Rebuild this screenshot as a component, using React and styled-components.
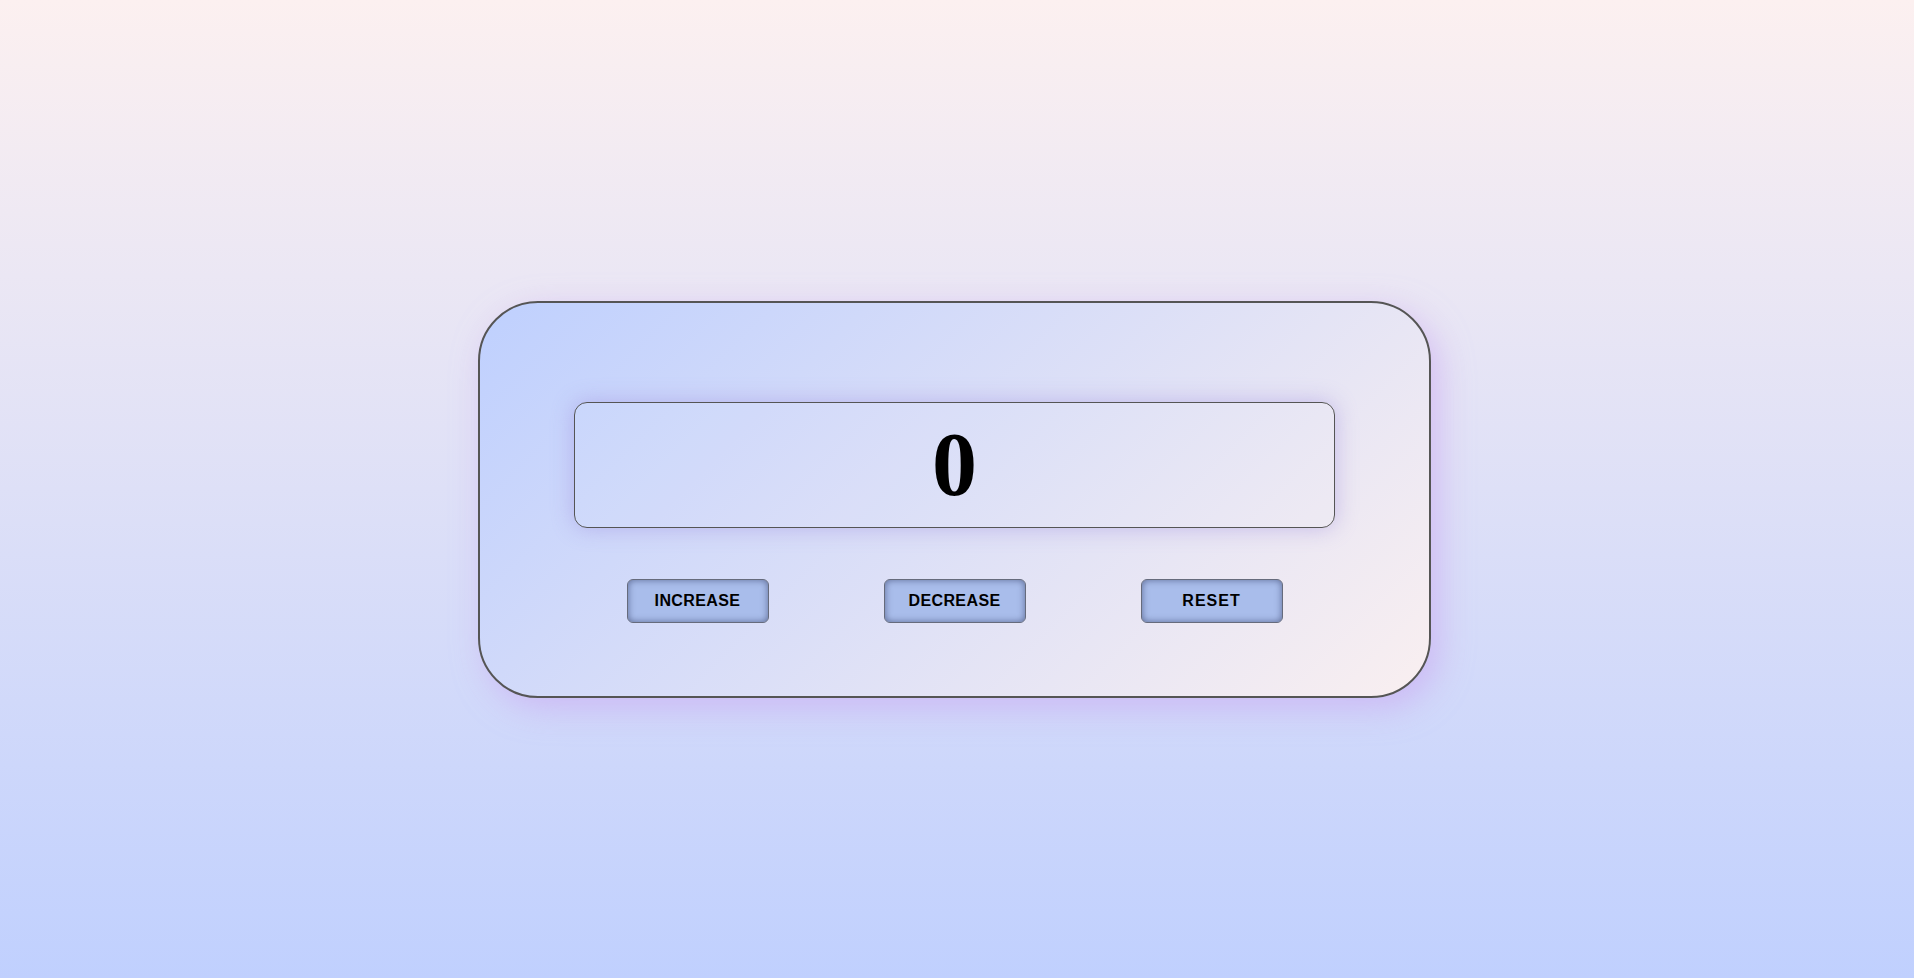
import React, { useState } from 'react';
import styled, { createGlobalStyle } from 'styled-components';

const GlobalStyle = createGlobalStyle`
  html, body {
    margin: 0;
    padding: 0;
  }
  body {
    font-family: "Liberation Sans", Arial, sans-serif;
  }
`;

const Page = styled.div`
  box-sizing: border-box;
  height: 100vh;
  overflow: hidden;
  padding: 20px 5px 0 0;
  display: flex;
  align-items: center;
  justify-content: center;
  background: linear-gradient(to bottom, #fcf0f0 0%, #c0d0fe 100%);
`;

const Card = styled.div`
  box-sizing: border-box;
  width: 953px;
  height: 397px;
  padding-top: 99px;
  border: 2px solid #555;
  border-radius: 60px;
  display: flex;
  flex-direction: column;
  align-items: center;
  background: linear-gradient(135deg, #bfd0fe 0%, #f9eff0 100%);
  box-shadow: 8px 10px 32px rgba(200, 160, 240, 0.55);
`;

const Display = styled.div`
  box-sizing: border-box;
  width: 761px;
  height: 126px;
  border: 1px solid #555;
  border-radius: 13px;
  display: flex;
  align-items: center;
  justify-content: center;
  background: rgba(255, 255, 255, 0.05);
  box-shadow: 0 0 22px rgba(150, 130, 220, 0.45);
  font-family: "Liberation Serif", "Times New Roman", serif;
  font-weight: bold;
  font-size: 90px;
  line-height: 1;
  color: #000;
`;

const Controls = styled.div`
  display: flex;
  gap: 115px;
  margin-top: 51px;
`;

const Button = styled.button`
  box-sizing: border-box;
  width: 142px;
  height: 44px;
  border: 1px solid #666b7c;
  border-radius: 6px;
  background: #a9bdeb;
  box-shadow: inset 0 0 7px rgba(40, 50, 90, 0.6);
  font-family: "Liberation Sans", Arial, sans-serif;
  font-weight: bold;
  font-size: 16px;
  letter-spacing: ${p => (p.$wide ? '1px' : '0.4px')};
  color: #000;
  cursor: pointer;
`;

export default function App() {
  const [count, setCount] = useState(0);

  return (
    <>
      <GlobalStyle />
      <Page>
        <Card>
          <Display>{count}</Display>
          <Controls>
            <Button onClick={() => setCount(c => c + 1)}>INCREASE</Button>
            <Button onClick={() => setCount(c => c - 1)}>DECREASE</Button>
            <Button $wide onClick={() => setCount(0)}>RESET</Button>
          </Controls>
        </Card>
      </Page>
    </>
  );
}
